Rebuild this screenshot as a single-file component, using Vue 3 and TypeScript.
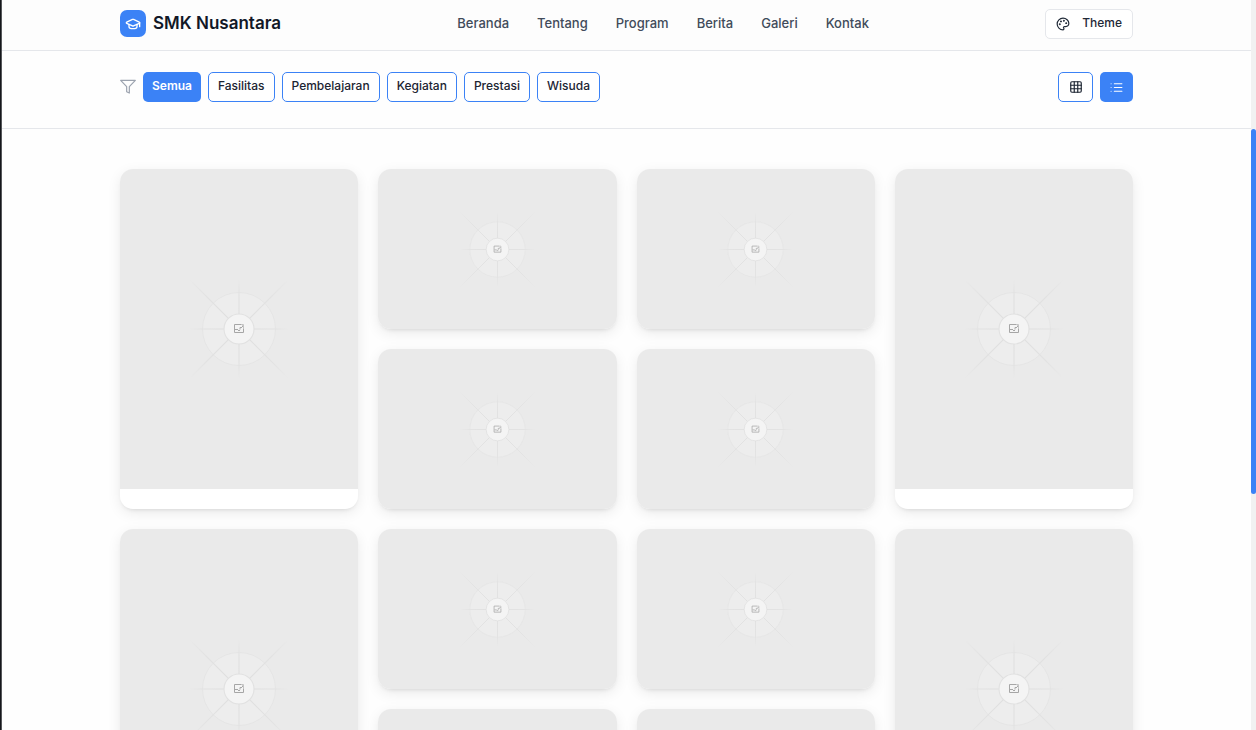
<script setup lang="ts">
import { ref } from 'vue'

interface Tile {
  id: number
  tall: boolean
}

const links: string[] = ['Beranda', 'Tentang', 'Program', 'Berita', 'Galeri', 'Kontak']
const categories: string[] = ['Semua', 'Fasilitas', 'Pembelajaran', 'Kegiatan', 'Prestasi', 'Wisuda']

const activeCategory = ref<string>('Semua')
const view = ref<'grid' | 'masonry'>('masonry')

const pattern: boolean[] = [true, false, false, true, false, false]
const tiles: Tile[] = Array.from({ length: 18 }, (_, i) => ({ id: i, tall: pattern[i % 6] }))
</script>

<template>
  <div class="window">
    <div class="edge"></div>
    <div class="page">
      <svg class="defs" aria-hidden="true">
        <defs>
          <radialGradient id="ray" gradientUnits="userSpaceOnUse" cx="60" cy="60" r="50">
            <stop offset="0.3" stop-color="#dfdfdf" />
            <stop offset="0.7" stop-color="#e1e1e1" />
            <stop offset="1" stop-color="#eaeaea" />
          </radialGradient>
          <radialGradient id="ray-long" gradientUnits="userSpaceOnUse" cx="60" cy="60" r="70">
            <stop offset="0.2" stop-color="#dfdfdf" />
            <stop offset="0.65" stop-color="#e2e2e2" />
            <stop offset="1" stop-color="#eaeaea" />
          </radialGradient>
          <symbol id="placeholder" viewBox="0 0 120 120">
            <circle cx="60" cy="60" r="36.5" fill="#ededed" stroke="#e5e5e5" stroke-width="1" />
            <path d="M60 10V110M10 60H110" stroke="url(#ray)" stroke-width="1.1" />
            <path d="M10 10L110 110M110 10L10 110" stroke="url(#ray-long)" stroke-width="1.1" />
            <circle cx="60" cy="60" r="15" fill="#f4f4f4" stroke="#e1e1e1" stroke-width="1.1" />
            <g fill="none" stroke="#a6a6a6" stroke-width="1">
              <path d="M62 55.500H55.500V63.500H64.500V59.500" />
              <path d="M62 55.500H64.500V60" stroke="#c4c4c4" />
              <path d="M56 60.500H59M59 61.500H61M61 60.500V58.500H63" />
              <path d="M63.500 56.500V58" />
            </g>
          </symbol>
        </defs>
      </svg>

      <header class="topbar">
        <div class="container topbar-inner">
          <a class="brand" href="#">
            <span class="logo">
              <svg viewBox="0 0 24 24" width="16" height="16" fill="none" stroke="currentColor" stroke-width="2" stroke-linecap="round" stroke-linejoin="round">
                <path d="M21.42 10.922a1 1 0 0 0-.019-1.838L12.83 5.18a2 2 0 0 0-1.66 0L2.6 9.08a1 1 0 0 0 0 1.832l8.57 3.908a2 2 0 0 0 1.66 0z" />
                <path d="M22 10v6M6 12.5V16a6 3 0 0 0 12 0v-3.5" />
              </svg>
            </span>
            <span class="brand-name">SMK Nusantara</span>
          </a>
          <nav class="nav">
            <a v-for="link in links" :key="link" href="#">{{ link }}</a>
          </nav>
          <button class="theme" type="button">
            <svg viewBox="0 0 24 24" width="14" height="14" fill="none" stroke="currentColor" stroke-width="2" stroke-linecap="round" stroke-linejoin="round" aria-hidden="true">
              <path d="M12 2C6.5 2 2 6.5 2 12s4.500 10 10 10c.926 0 1.648-.746 1.648-1.688 0-.437-.18-.835-.437-1.125-.29-.289-.438-.652-.438-1.125a1.640 1.640 0 0 1 1.668-1.668h1.996c3.051 0 5.555-2.503 5.555-5.554C21.965 6.012 17.461 2 12 2z" />
              <g fill="currentColor">
                <circle cx="13.500" cy="6.500" r=".7" />
                <circle cx="17.500" cy="10.500" r=".7" />
                <circle cx="8.500" cy="7.500" r=".7" />
                <circle cx="6.500" cy="12.500" r=".7" />
              </g>
            </svg>
            <span class="theme-label">Theme</span>
          </button>
        </div>
      </header>

      <section class="filters">
        <div class="container filters-inner">
          <div class="chips">
            <svg class="funnel" viewBox="0 0 24 24" width="16" height="16" fill="none" stroke="currentColor" stroke-width="1.800" stroke-linecap="round" stroke-linejoin="round" aria-hidden="true">
              <path d="M23 2H1l9 9.460V19l4 2v-9.540L23 2z" />
            </svg>
            <button
              v-for="category in categories"
              :key="category"
              type="button"
              class="chip"
              :class="{ active: category === activeCategory }"
              @click="activeCategory = category"
            >
              {{ category }}
            </button>
          </div>
          <div class="views">
            <button type="button" class="view" :class="{ active: view === 'grid' }" aria-label="Grid" @click="view = 'grid'">
              <svg viewBox="0 0 24 24" width="14" height="14" fill="none" stroke="currentColor" stroke-width="2" stroke-linecap="round" stroke-linejoin="round">
                <rect x="3" y="3" width="18" height="18" rx="2" />
                <path d="M3 9h18M3 15h18M9 3v18M15 3v18" />
              </svg>
            </button>
            <button type="button" class="view" :class="{ active: view === 'masonry' }" aria-label="Masonry" @click="view = 'masonry'">
              <svg viewBox="0 0 24 24" width="13" height="13" fill="none" stroke="currentColor" stroke-width="2" stroke-linecap="round" stroke-linejoin="round">
                <path d="M8 5h14M8 12h14M8 19h14M2 5h.01M2 12h.01M2 19h.01" />
              </svg>
            </button>
          </div>
        </div>
      </section>

      <main class="container gallery">
        <article v-for="tile in tiles" :key="tile.id" class="card" :class="{ tall: tile.tall }">
          <div class="image">
            <svg class="art" aria-hidden="true"><use href="#placeholder" /></svg>
          </div>
        </article>
      </main>
    </div>
    <div class="track"><div class="thumb"></div></div>
  </div>
</template>

<style>
body {
  margin: 0;
  overflow: hidden;
}
</style>

<style scoped>
* {
  box-sizing: border-box;
}
.window {
  display: grid;
  grid-template-columns: 2px 1fr 5px;
  height: 100vh;
  overflow: hidden;
  font-family: Inter, "Liberation Sans", sans-serif;
  color: #111827;
  background: #fefefe;
}
.edge {
  background: #15171b;
  border-right: 1px solid #55575a;
}
.page {
  min-width: 0;
  overflow: hidden;
}
.defs {
  display: block;
  width: 0;
  height: 0;
}
.container {
  width: calc(100% - 32px);
  max-width: 1013px;
  margin: 0 auto;
}
.topbar {
  border-bottom: 1px solid #e5e7eb;
  background: #fdfdfd;
}
.topbar-inner {
  display: flex;
  align-items: center;
  justify-content: space-between;
  height: 50px;
  padding-bottom: 3px;
}
.brand {
  display: flex;
  align-items: center;
  gap: 7px;
  color: #111827;
  font-size: 17px;
  font-weight: 600;
  text-decoration: none;
}
.brand-name,
.nav,
.theme-label {
  padding-bottom: 2px;
}
.logo {
  display: grid;
  place-items: center;
  width: 26px;
  height: 27px;
  border-radius: 7px;
  background: #3b82f6;
  color: #fff;
}
.nav {
  display: flex;
  gap: 28px;
}
.nav a {
  color: #414b5a;
  font-size: 13px;
  font-weight: 500;
  text-decoration: none;
}
button {
  font-family: inherit;
  cursor: pointer;
}
.theme {
  display: flex;
  align-items: center;
  gap: 12px;
  height: 30px;
  padding: 0 10px;
  border: 1px solid #e5e7eb;
  border-radius: 5px;
  background: #fff;
  color: #1f2937;
  font-size: 12px;
  font-weight: 500;
}
.filters {
  border-bottom: 1px solid #e5e7eb;
  padding: 21px 0 26px;
}
.filters-inner,
.chips,
.views {
  display: flex;
  align-items: center;
}
.filters-inner {
  justify-content: space-between;
}
.chips,
.views {
  gap: 7px;
}
.funnel {
  color: #9ca3af;
}
.chip,
.view {
  height: 30px;
  border: 1px solid #3b82f6;
  border-radius: 5px;
  background: #fff;
  color: #1c2432;
}
.chip {
  padding: 0 9px 3px;
  font-size: 12px;
  font-weight: 500;
}
.view {
  display: grid;
  place-items: center;
  width: 35px;
  padding: 0;
}
.chip.active,
.view.active {
  border: 0;
  background: #3b82f6;
  color: #fff;
}
.chip.active {
  font-weight: 600;
}
.view.active {
  width: 33px;
}
.gallery {
  display: grid;
  grid-template-columns: repeat(4, 1fr);
  grid-auto-rows: 160px;
  grid-auto-flow: dense;
  gap: 20px;
  padding-top: 40px;
}
.card {
  overflow: hidden;
  border-radius: 13px;
  background: #fff;
  box-shadow: 0 4px 14px rgba(0, 0, 0, 0.08), 0 3px 5px -3px rgba(0, 0, 0, 0.14);
}
.card.tall {
  grid-row: span 2;
}
.image {
  display: grid;
  place-items: center;
  height: 160px;
  background: #eaeaea;
}
.tall .image {
  height: 320px;
}
.art {
  width: 91px;
  height: 91px;
}
.tall .art {
  width: 120px;
  height: 120px;
}
.track {
  padding-top: 129px;
  background: #f1f1f1;
}
.thumb {
  height: 365px;
  border-radius: 3px;
  background: #3b82f6;
}
</style>
